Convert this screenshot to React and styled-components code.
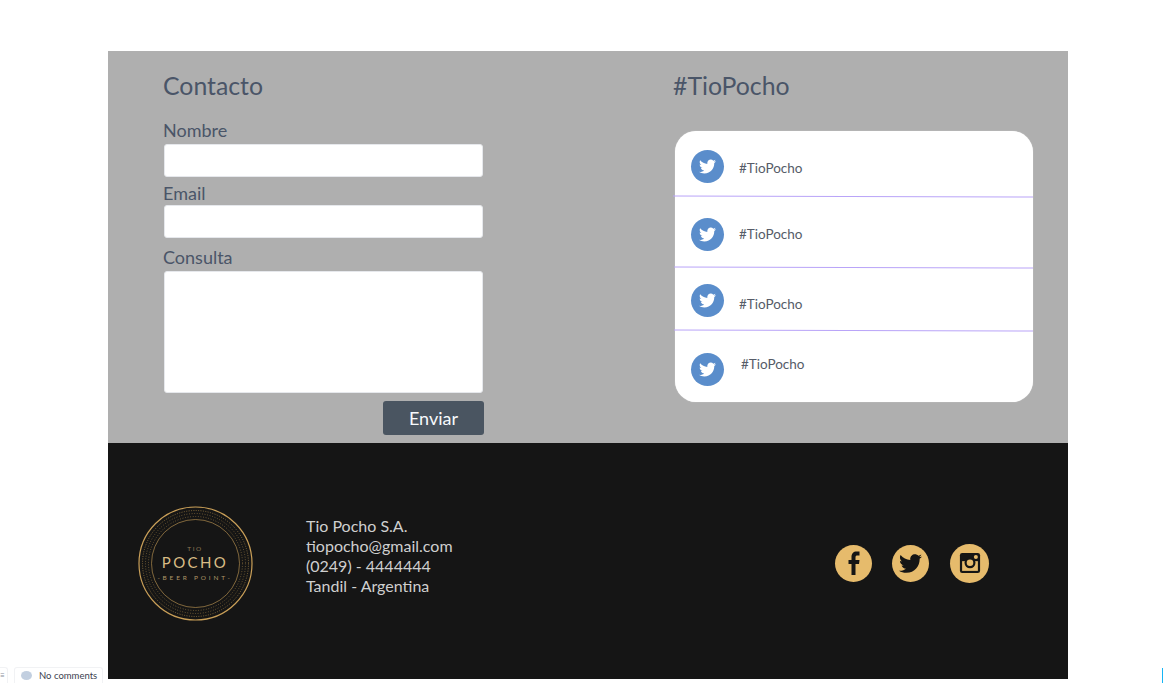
import React from 'react'
import styled, { createGlobalStyle } from 'styled-components'
import { FaTwitter } from 'react-icons/fa'

const GlobalStyle = createGlobalStyle`
  html, body {
    margin: 0;
    padding: 0;
    background: #fff;
    font-family: Lato, "Liberation Sans", sans-serif;
  }
  * {
    box-sizing: border-box;
  }
`

const Page = styled.div`
  position: relative;
  width: 1163px;
  height: 683px;
  padding: 51px 95px 0 108px;
  overflow: hidden;
`

const ContactSection = styled.section`
  display: grid;
  grid-template-columns: 565px 1fr;
  height: 392px;
  background: #afafaf;
  color: #4a5568;
`

const FormColumn = styled.div`
  padding: 21px 0 0 55px;
`

const Title = styled.h2`
  margin: 0;
  font-size: 24.8px;
  line-height: 28px;
  font-weight: 400;
  color: #4a5568;
`

const Form = styled.form`
  display: flex;
  flex-direction: column;
  width: 321px;
  margin-top: 19px;
`

const Label = styled.label`
  display: block;
  height: ${(p) => p.$height}px;
  font-size: 18px;
  line-height: 22px;
`

const Input = styled.input`
  display: block;
  width: 319px;
  height: 33px;
  margin: 0 0 ${(p) => p.$after}px 1px;
  padding: 0 12px;
  background: #fff;
  border: 1px solid #e6e8ec;
  border-radius: 3px;
`

const TextArea = styled.textarea`
  display: block;
  width: 319px;
  height: 122px;
  margin: 0 0 8px 1px;
  padding: 8px 12px;
  background: #fff;
  border: 1px solid #e6e8ec;
  border-radius: 3px;
  resize: none;
`

const Submit = styled.button`
  align-self: flex-end;
  width: 101px;
  height: 34px;
  padding: 0;
  background: #4a5561;
  border: 0;
  border-radius: 3px;
  color: #f7fafc;
  font-family: inherit;
  font-size: 18px;
`

const FeedColumn = styled.div`
  padding: 21px 0 0 0;
`

const FeedCard = styled.div`
  width: 358px;
  height: 271px;
  margin: 31px 0 0 2px;
  background: #fff;
  border-radius: 21px;
  box-shadow: 0 0 1px rgba(255, 255, 255, 0.7);
`

const FeedRow = styled.div`
  display: flex;
  align-items: flex-start;
  height: ${(p) => p.$height}px;
  padding: ${(p) => p.$top}px 0 0 16px;
`

const BirdBadge = styled.div`
  display: flex;
  align-items: center;
  justify-content: center;
  flex: none;
  width: 33px;
  height: 33px;
  border-radius: 50%;
  background: #5a8dcb;
  color: #fff;
  font-size: 17px;
`

const FeedText = styled.span`
  margin: ${(p) => p.$top}px 0 0 ${(p) => p.$left}px;
  font-size: 13.5px;
  line-height: 16px;
  color: #565c68;
`

const Divider = styled.div`
  height: 1px;
  margin-left: ${(p) => p.$left}px;
  background: #b9a4f8;
  transform: rotate(0.15deg);
`

const Footer = styled.footer`
  display: flex;
  align-items: center;
  height: 236px;
  padding: 4px 0 0 30px;
  background: #151515;
`

const Logo = styled.svg`
  flex: none;
  width: 115px;
  height: 115px;
`

const LogoText = styled.text`
  font-family: Lato, "Liberation Sans", sans-serif;
  fill: ${(p) => p.$color};
  text-anchor: middle;
  font-size: ${(p) => p.$size}px;
  letter-spacing: ${(p) => p.$spacing}px;
`

const Address = styled.address`
  width: 529px;
  margin: 0 0 14px 53px;
  font-style: normal;
  font-size: 16px;
  line-height: 20px;
  color: #cfcfcf;
`

const Socials = styled.div`
  display: flex;
  align-items: center;
  gap: 20px;
`

const SocialBadge = styled.div`
  display: flex;
  align-items: center;
  justify-content: center;
  width: ${(p) => p.$size}px;
  height: ${(p) => p.$size}px;
  margin-left: ${(p) => p.$left || 0}px;
  border-radius: 50%;
  background: #e6bb6c;
  color: #151515;
  font-size: ${(p) => p.$icon}px;
`

const CommentChip = styled.div`
  position: absolute;
  left: 14px;
  bottom: 0;
  display: flex;
  align-items: center;
  gap: 7px;
  width: 89px;
  height: 16px;
  padding-left: 6px;
  background: #fff;
  border: 1px solid #f1f2f4;
  border-bottom: 0;
  border-radius: 3px 3px 0 0;
  font-size: 9.5px;
  color: #3c4250;
`

const CommentDot = styled.span`
  width: 11px;
  height: 9px;
  border-radius: 50%;
  background: #c2cfe0;
`

const ChipStub = styled.div`
  position: absolute;
  left: -4px;
  bottom: 0;
  width: 12px;
  height: 16px;
  padding-left: 3px;
  background: #fff;
  border: 1px solid #f1f2f4;
  border-bottom: 0;
  border-radius: 3px 3px 0 0;
  font-size: 8px;
  line-height: 15px;
  color: #8a8f98;
`

const EdgeMark = styled.div`
  position: absolute;
  right: 0;
  bottom: 0;
  width: 1px;
  height: 15px;
  background: #16b5f5;
`

const feed = [
  { height: 65, top: 19, textTop: 10, left: 15 },
  { height: 70, top: 21, textTop: 8, left: 15 },
  { height: 62, top: 16, textTop: 12, left: 15 },
  { height: 71, top: 22, textTop: 3, left: 17 },
]

function FacebookGlyph() {
  return (
    <svg width="12" height="24" viewBox="0 0 12 24" fill="currentColor">
      <path d="M3.5 24V13H0.5V9H3.5V6C3.5 2.5 5.5 0.5 8.5 0.5H11.5V4.5H9.5C8 4.5 7.5 5 7.5 6.5V9H11.5L11 13H7.5V24Z" />
    </svg>
  )
}

function InstagramGlyph() {
  return (
    <svg width="22" height="22" viewBox="0 0 24 24" fill="none">
      <rect x="1" y="1" width="22" height="22" rx="2.5" fill="#151515" />
      <rect x="3.4" y="10" width="17.2" height="10.6" fill="#e6bb6c" />
      <circle cx="18.4" cy="5.4" r="2.2" fill="#e6bb6c" />
      <circle cx="12" cy="11.8" r="6" fill="#151515" />
      <circle cx="12" cy="11.8" r="3.6" fill="#e6bb6c" />
    </svg>
  )
}

export default function App() {
  return (
    <Page>
      <GlobalStyle />
      <ContactSection>
        <FormColumn>
          <Title>Contacto</Title>
          <Form>
            <Label $height={25}>Nombre</Label>
            <Input $after={5} />
            <Label $height={23}>Email</Label>
            <Input $after={8} />
            <Label $height={25}>Consulta</Label>
            <TextArea />
            <Submit type="button">Enviar</Submit>
          </Form>
        </FormColumn>
        <FeedColumn>
          <Title>#TioPocho</Title>
          <FeedCard>
            {feed.map((row, i) => (
              <React.Fragment key={i}>
                <FeedRow $height={row.height} $top={row.top}>
                  <BirdBadge>
                    <FaTwitter />
                  </BirdBadge>
                  <FeedText $top={row.textTop} $left={row.left}>#TioPocho</FeedText>
                </FeedRow>
                {i < 3 && <Divider $left={i === 0 ? -2 : -1} />}
              </React.Fragment>
            ))}
          </FeedCard>
        </FeedColumn>
      </ContactSection>
      <Footer>
        <Logo viewBox="0 0 115 115">
          <circle cx="57.5" cy="57.5" r="56.5" fill="none" stroke="#c99f58" strokeWidth="1.2" />
          <circle cx="57.5" cy="57.5" r="53" fill="none" stroke="#a98748" strokeWidth="0.7" strokeDasharray="1 1.4" />
          <circle cx="57.5" cy="57.5" r="50" fill="none" stroke="#a98748" strokeWidth="0.7" strokeDasharray="0.8 1.8" />
          <circle cx="57.5" cy="57.5" r="47" fill="none" stroke="#a98748" strokeWidth="0.7" strokeDasharray="0.8 1.8" />
          <circle cx="57.5" cy="57.5" r="44" fill="none" stroke="#c99f58" strokeWidth="0.6" />
          <LogoText x="57" y="44.5" $size={6.5} $spacing={1.5} $color="#8f7a55">TIO</LogoText>
          <LogoText x="57" y="62" $size={15} $spacing={2.4} $color="#d8bc85">POCHO</LogoText>
          <LogoText x="57" y="73.5" $size={6.5} $spacing={2.8} $color="#ad9568">-BEER POINT-</LogoText>
        </Logo>
        <Address>
          Tio Pocho S.A.<br />
          tiopocho@gmail.com<br />
          (0249) - 4444444<br />
          Tandil - Argentina
        </Address>
        <Socials>
          <SocialBadge $size={37}><FacebookGlyph /></SocialBadge>
          <SocialBadge $size={37} $icon={23}><FaTwitter /></SocialBadge>
          <SocialBadge $size={39} $left={1}><InstagramGlyph /></SocialBadge>
        </Socials>
      </Footer>
      <ChipStub>≡</ChipStub>
      <CommentChip><CommentDot />No comments</CommentChip>
      <EdgeMark />
    </Page>
  )
}
